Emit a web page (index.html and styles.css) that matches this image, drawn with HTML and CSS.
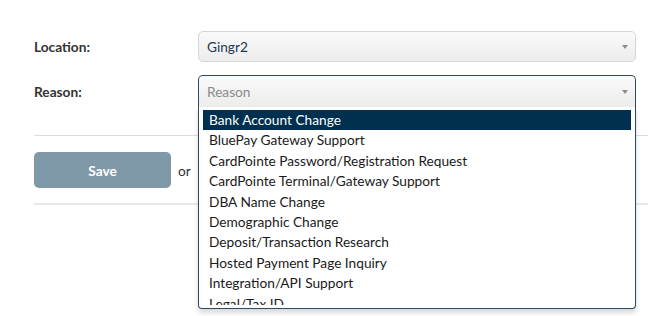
FILE: index.html
```html
<!DOCTYPE html>
<html>
<head>
<meta charset="utf-8">
<link rel="stylesheet" href="styles.css">
</head>
<body>
<form class="form">
  <div class="row">
    <label class="label">Location:</label>
    <div class="select">
      <span class="value">Gingr2</span>
      <span class="arrow"></span>
    </div>
  </div>
  <div class="row row-reason">
    <label class="label">Reason:</label>
    <div class="select select-open">
      <span class="placeholder">Reason</span>
      <span class="arrow"></span>
      <div class="drop">
        <ul class="results">
          <li class="hl">Bank Account Change</li>
          <li>BluePay Gateway Support</li>
          <li>CardPointe Password/Registration Request</li>
          <li>CardPointe Terminal/Gateway Support</li>
          <li>DBA Name Change</li>
          <li>Demographic Change</li>
          <li>Deposit/Transaction Research</li>
          <li>Hosted Payment Page Inquiry</li>
          <li>Integration/API Support</li>
          <li>Legal/Tax ID</li>
        </ul>
      </div>
    </div>
  </div>
  <hr class="rule">
  <div class="actions">
    <button type="button" class="btn">Save</button>
    <span class="or">or</span>
  </div>
  <hr class="rule rule-bottom">
</form>
</body>
</html>
```

FILE: styles.css
```css
html, body {
  margin: 0;
  padding: 0;
  background: #fff;
}
body {
  font-family: Lato, "Open Sans", sans-serif;
  font-size: 13.7px;
  color: #222;
  width: 648px;
  height: 316px;
  overflow: hidden;
}
.form {
  padding: 31px 0 0 34px;
}
.row {
  display: flex;
  align-items: center;
  height: 31px;
}
.row-reason {
  margin-top: 13px;
  height: 32px;
}
.label {
  width: 164px;
  font-weight: 700;
  color: #333;
}
.select {
  position: relative;
  box-sizing: border-box;
  width: 438px;
  height: 100%;
  border: 1px solid #d6d6d6;
  border-radius: 5px;
  background: linear-gradient(#fafafa 0%, #f3f3f3 50%, #ececec 100%);
  display: flex;
  align-items: center;
  padding-left: 8px;
}
.value {
  color: #1c3a56;
}
.placeholder {
  color: #8a8a8a;
}
.arrow {
  position: absolute;
  right: 7px;
  top: 50%;
  margin-top: -2px;
  width: 0;
  height: 0;
  border-left: 3px solid transparent;
  border-right: 3px solid transparent;
  border-top: 4px solid #8c8c8c;
}
.select-open {
  border-color: #2a4a66;
  border-bottom: none;
  border-radius: 5px 5px 0 0;
}
.drop {
  position: absolute;
  left: -1px;
  right: -1px;
  top: 31px;
  height: 202px;
  box-sizing: border-box;
  background: #fff;
  border: 1px solid #2a4a66;
  border-top: none;
  border-radius: 0 0 4px 4px;
  box-shadow: 0 4px 5px rgba(0, 0, 0, 0.15);
  z-index: 5;
  padding-top: 3px;
}
.results {
  list-style: none;
  margin: 0 4px 0 0;
  padding: 0 0 0 4px;
  height: 195px;
  overflow: hidden;
}
.results li {
  padding: 0 6px;
  height: 20.4px;
  line-height: 20.4px;
  white-space: nowrap;
  color: #1a1a1a;
}
.results li.hl {
  background: #00304f;
  color: #fff;
}
.rule {
  border: none;
  border-top: 1px solid #dcdcdc;
  margin: 28px 0 0 0;
  height: 0;
}
.actions {
  display: flex;
  align-items: center;
  margin-top: 16px;
  height: 36px;
}
.btn {
  width: 137px;
  height: 36px;
  border: none;
  border-radius: 5px;
  background: #7f99a8;
  color: #fff;
  font-family: Lato, "Open Sans", sans-serif;
  font-size: 13.7px;
  font-weight: 700;
  padding: 0;
}
.or {
  margin-left: 7px;
  color: #333;
}
.rule-bottom {
  margin-top: 15px;
  border-top: 2px solid #e8e8e8;
}
```
